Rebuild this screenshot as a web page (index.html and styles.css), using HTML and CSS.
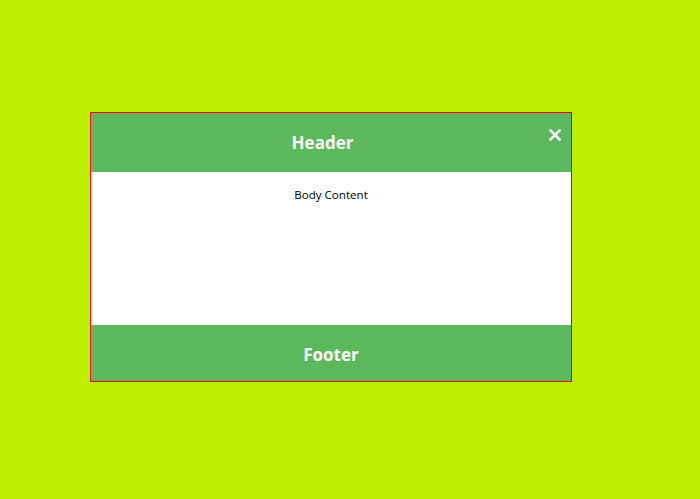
FILE: index.html
```html
<!DOCTYPE html>
<html>
<head>
<meta charset="utf-8">
<link rel="stylesheet" href="styles.css">
</head>
<body>
<div class="modal">
  <div class="modal-header">
    <h2 class="title">Header</h2>
    <span class="close"><svg width="12" height="12" viewBox="0 0 12 12"><path d="M1.5 1.5L10.5 10.5M10.5 1.5L1.5 10.5" stroke="#fff" stroke-width="2.6" stroke-linecap="square"/></svg></span>
  </div>
  <div class="modal-body">
    <p>Body Content</p>
  </div>
  <div class="modal-footer">
    <h3>Footer</h3>
  </div>
</div>
</body>
</html>
```
FILE: styles.css
```css
html, body {
  margin: 0;
  padding: 0;
}
body {
  background: #bcf000;
  width: 700px;
  height: 499px;
  font-family: "Open Sans", "Noto Sans", sans-serif;
  overflow: hidden;
}
.modal {
  margin: 112px 0 0 90px;
  width: 480px;
  border: 1px solid #ff0000;
  display: flex;
  flex-direction: column;
}
.modal-header {
  height: 59px;
  background: #5cb85c;
  display: flex;
  align-items: center;
  color: #fff;
}
.title {
  flex: 1;
  margin: 0;
  padding-left: 5px;
  text-align: center;
  font-size: 17px;
  font-weight: 700;
}
.close {
  width: 22px;
  align-self: flex-start;
  margin-top: 16px;
  display: flex;
}
.close svg {
  display: block;
}
.modal-body {
  height: 153px;
  background: #fff;
}
.modal-body p {
  margin: 15px 0 0;
  text-align: center;
  font-size: 11.6px;
  color: #000;
}
.modal-footer {
  height: 56px;
  background: #5cb85c;
  display: flex;
  align-items: center;
  justify-content: center;
  color: #fff;
}
.modal-footer h3 {
  margin: 2px 0 0;
  font-size: 17px;
  font-weight: 700;
}
```
